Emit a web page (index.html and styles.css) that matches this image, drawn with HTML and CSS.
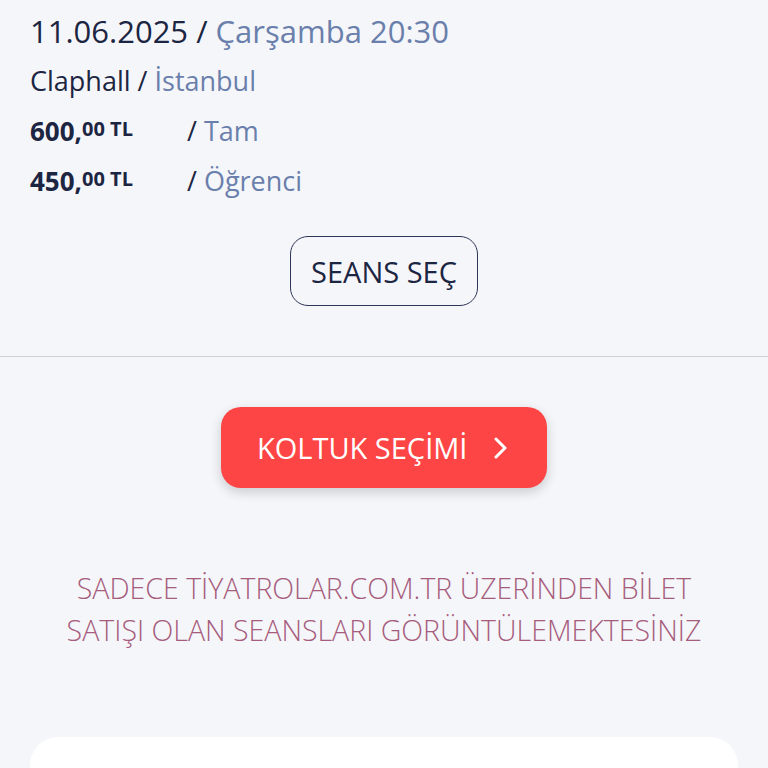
FILE: index.html
```html
<!DOCTYPE html>
<html lang="tr">
<head>
  <meta charset="UTF-8">
  <meta name="viewport" content="width=device-width, initial-scale=1.0">
  <title>Seans Bilgisi</title>
  <link rel="stylesheet" href="styles.css">
</head>
<body>

  <div class="show-info">
    <div class="row row-date">11.06.2025 / <span class="muted">Çarşamba 20:30</span></div>
    <div class="row">Claphall / <span class="muted">İstanbul</span></div>
    <div class="row price-row">
      <span class="price">600,<sup>00 TL</sup></span>
      <span>/ <span class="muted">Tam</span></span>
    </div>
    <div class="row price-row">
      <span class="price">450,<sup>00 TL</sup></span>
      <span>/ <span class="muted">Öğrenci</span></span>
    </div>
    <div class="session-wrap">
      <button class="session-btn">SEANS SEÇ</button>
    </div>
  </div>

  <div class="seat-section">
    <button class="seat-btn">
      KOLTUK SEÇİMİ
      <svg width="14" height="22" viewBox="0 0 14 22"><path d="M3 2l9 9-9 9" fill="none" stroke="#fff" stroke-width="3" stroke-linecap="round" stroke-linejoin="round"/></svg>
    </button>
    <p class="notice">SADECE TİYATROLAR.COM.TR ÜZERİNDEN BİLET<br>SATIŞI OLAN SEANSLARI GÖRÜNTÜLEMEKTESİNİZ</p>
    <div class="card"></div>
  </div>

</body>
</html>
```

FILE: styles.css
```css
body {
  margin: 0;
  font-family: "Open Sans", sans-serif;
  background-color: #f5f6fa;
  color: #1c2541;
}

.show-info {
  padding: 6px 30px 50px;
  border-bottom: 1px solid #cfd1d6;
}

.row {
  font-size: 27px;
  line-height: 50px;
}

.row-date {
  font-size: 31px;
}

.muted {
  color: #6a7fab;
}

.price-row {
  display: flex;
}

.price {
  width: 157px;
  font-size: 26px;
  font-weight: 700;
}

.price sup {
  font-size: 20px;
  vertical-align: 5px;
  line-height: 0;
}

.session-wrap {
  display: flex;
  justify-content: center;
  margin-top: 30px;
}

.session-btn {
  height: 70px;
  padding: 0 20px;
  font-family: inherit;
  font-size: 29px;
  color: #1c2541;
  background: transparent;
  border: 1.5px solid #2d3658;
  border-radius: 18px;
}

.seat-section {
  display: flex;
  flex-direction: column;
  align-items: center;
  padding-top: 50px;
}

.seat-btn {
  display: flex;
  align-items: center;
  gap: 26px;
  width: 326px;
  height: 81px;
  padding: 0 0 0 36px;
  font-family: inherit;
  font-size: 29px;
  color: #fff;
  background-color: #fd4545;
  border: none;
  border-radius: 20px;
  box-shadow: 0 4px 12px rgba(0, 0, 0, 0.18);
}

.notice {
  margin: 79px 20px 0;
  font-size: 28.5px;
  font-weight: 300;
  line-height: 42px;
  color: #a65c7c;
  text-align: center;
}

.card {
  align-self: stretch;
  height: 80px;
  margin: 86px 30px 0;
  background: #fff;
  border-radius: 28px;
}
```
